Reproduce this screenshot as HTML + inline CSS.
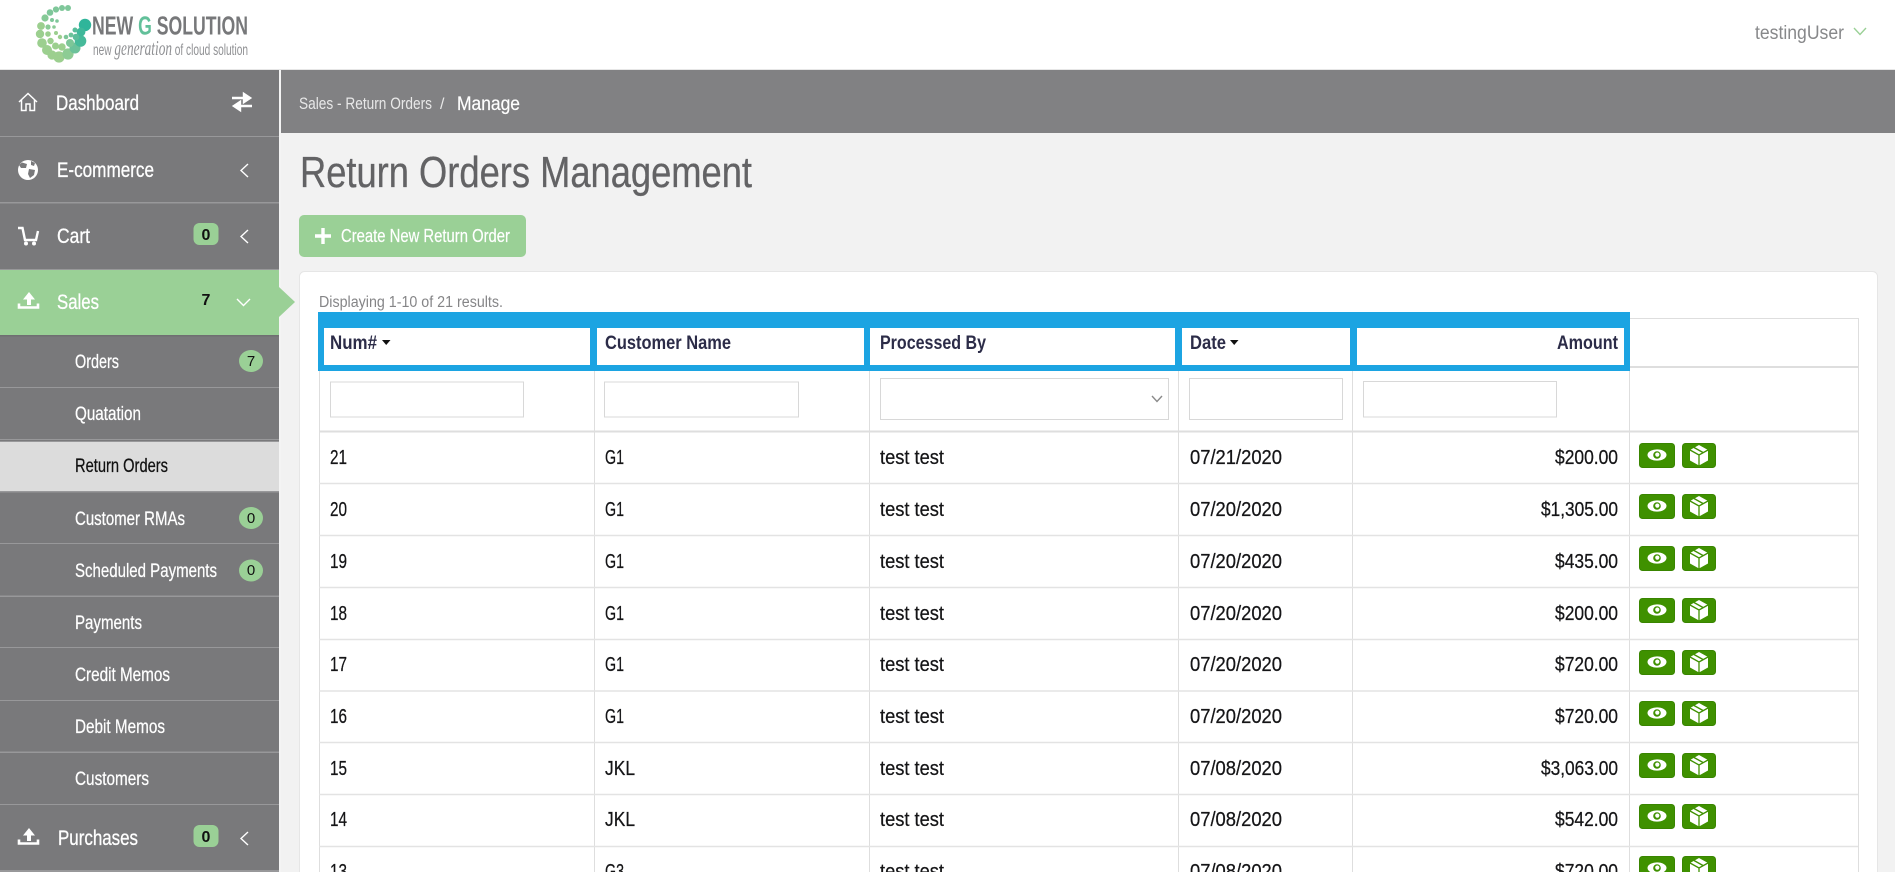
<!DOCTYPE html>
<html lang="en">
<head>
<meta charset="utf-8">
<title>Return Orders Management</title>
<style>
html,body{margin:0;padding:0;width:1895px;height:872px;overflow:hidden;background:#f2f2f2}
svg{display:block}
text{font-family:"Liberation Sans",Arial,sans-serif}
</style>
</head>
<body>
<svg xmlns="http://www.w3.org/2000/svg" width="1895" height="872" viewBox="0 0 1895 872">
<defs>
<g id="lt"><path d="M7 0L0 6.5L7 13" fill="none" stroke="#fff" stroke-width="1.4"/></g>
<g id="btns">
<rect x="0.5" y="0.5" width="35" height="24" rx="3" fill="#3f9100" stroke="#398500"/>
<ellipse cx="18" cy="12" rx="9.5" ry="5.6" fill="#fff"/>
<circle cx="18" cy="12" r="3.8" fill="#3f9100"/>
<circle cx="18.3" cy="11.6" r="2.1" fill="#fff"/>
<rect x="43.5" y="0.5" width="33" height="24" rx="3" fill="#3f9100" stroke="#398500"/>
<path d="M60 2L69 7V17.5L60 22.5L51 17.5V7Z" fill="#fff"/>
<path d="M51 7L60 12L69 7M60 12V22.5M55 4.5L64 9.5" fill="none" stroke="#3f9100" stroke-width="1.3"/>
</g>
</defs>

<!-- header -->
<rect width="1895" height="70" fill="#fff"/>
<rect y="69" width="1895" height="1" fill="#e6e6e6"/>
<g>
<g fill="#9ccf8f">
<circle cx="68" cy="8" r="3" fill="#7fc79a"/><circle cx="62" cy="8" r="3" fill="#7fc79a"/><circle cx="56" cy="9.500" r="3.100" fill="#7fc79a"/><circle cx="50" cy="12.500" r="3.300" fill="#7fc79a"/>
<circle cx="45" cy="18" r="3.600" fill="#86ca97"/><circle cx="41" cy="26" r="3.900"/><circle cx="40" cy="34" r="4.200"/><circle cx="42" cy="43" r="4.800"/>
<circle cx="47" cy="50" r="5"/><circle cx="52" cy="55" r="4.600"/><circle cx="59" cy="57" r="5.600"/><circle cx="68" cy="54" r="5.600" fill="#8dcc94"/>
<circle cx="75" cy="48" r="5.500" fill="#6cc29a"/><circle cx="80.500" cy="41" r="5.800" fill="#46ba9a"/><circle cx="85" cy="25" r="6.200" fill="#2fb59a"/><circle cx="81" cy="32" r="4.400" fill="#3fb89a"/>
<circle cx="52" cy="20" r="2" fill="#7fc79a"/><circle cx="48" cy="27" r="2.600" fill="#8acb96"/><circle cx="48" cy="34" r="2.800"/><circle cx="50.500" cy="41" r="3.200"/>
<circle cx="55.500" cy="46" r="3.500"/><circle cx="62" cy="47" r="3.700"/><circle cx="70" cy="43" r="4" fill="#7dc698"/><circle cx="76" cy="37" r="3.300" fill="#5abd9a"/>
<circle cx="75" cy="30" r="2.500" fill="#58bd9a"/><circle cx="71" cy="35" r="2.400" fill="#6cc29a"/><circle cx="66" cy="37" r="2.300" fill="#7dc698"/><circle cx="60" cy="37" r="2.200"/>
<circle cx="56" cy="33" r="2"/><circle cx="54" cy="27" r="1.800" fill="#8acb96"/><circle cx="57" cy="21" r="1.800" fill="#7fc79a"/>
</g>
<text x="92" y="34.500" font-size="26" font-weight="bold" fill="#77787a" textLength="156" lengthAdjust="spacingAndGlyphs">NEW <tspan fill="#62c09a">G</tspan> SOLUTION</text>
<text x="93" y="55" font-size="16" fill="#8f9093" textLength="155" lengthAdjust="spacingAndGlyphs">new <tspan font-family="Liberation Serif,serif" font-style="italic" font-size="21">generation</tspan> of cloud solution</text>
</g>
<text x="1755" y="39" font-size="19" fill="#87888a" textLength="89" lengthAdjust="spacingAndGlyphs">testingUser</text>
<path d="M1854 28L1860 34.500L1866 28" fill="none" stroke="#9ad096" stroke-width="1.400"/>

<!-- sidebar -->
<rect y="70" width="279" height="802" fill="#79797b"/>
<rect x="279" y="70" width="2" height="802" fill="#f4f4f4"/>
<rect y="270" width="279" height="65" fill="#9ad096"/>
<path d="M279 287L295 302L279 317Z" fill="#9ad096"/>
<rect y="442" width="279" height="50" fill="#dcdcdc"/>
<g fill="#98989a">
<rect y="136" width="279" height="1"/><rect y="202" width="279" height="1.500"/><rect y="269" width="279" height="1"/>
<rect y="335" width="279" height="1.500" fill="#6f6f71"/>
<rect y="387" width="279" height="1"/><rect y="439" width="279" height="1"/><rect y="441" width="279" height="1"/><rect y="491" width="279" height="1.500"/>
<rect y="543" width="279" height="1"/><rect y="595.500" width="279" height="1.500"/><rect y="647" width="279" height="1"/><rect y="700" width="279" height="1"/>
<rect y="751.500" width="279" height="1.500"/><rect y="804" width="279" height="1"/><rect y="870" width="279" height="2"/>
</g>

<!-- side icons -->
<path d="M19 102L28 93.500L37 102M21.500 100V110.500H26V104H30V110.500H34.500V100" fill="none" stroke="#fff" stroke-width="1.500"/>
<circle cx="28" cy="170" r="10" fill="#fff"/>
<path d="M22 162.500L27 164L26 168L21 168L19 165ZM29 169L35 170L34 175L30 178L28 174ZM31 161L35 163L34 166L31 165Z" fill="#79797b"/>
<path d="M18 228H22.500L25 240H36L38 231" fill="none" stroke="#fff" stroke-width="2.400"/>
<circle cx="26" cy="243.500" r="2" fill="#fff"/><circle cx="34" cy="243.500" r="2" fill="#fff"/>
<path d="M29 292L35 299.500H31V305H27V299.500H23Z" fill="#fff"/>
<path d="M19 303.500V307.500H38V303.500" fill="none" stroke="#fff" stroke-width="2.600"/>
<path d="M29 828L35 835.500H31V841H27V835.500H23Z" fill="#fff"/>
<path d="M19 839.500V843.500H38V839.500" fill="none" stroke="#fff" stroke-width="2.600"/>
<path d="M232 98H249M244 94L250 98L244 102V94Z" stroke="#fff" stroke-width="2.400" fill="#fff"/>
<path d="M252 106H235M240 102L234 106L240 110V102Z" stroke="#fff" stroke-width="2.400" fill="#fff"/>
<use href="#lt" x="241" y="164"/>
<use href="#lt" x="241" y="230"/>
<use href="#lt" x="241" y="832"/>
<path d="M237 299L243.500 305.500L250 299" fill="none" stroke="#fff" stroke-width="1.400"/>

<!-- side labels -->
<g fill="#fff" stroke="#fff" stroke-width=".3" font-size="21">
<text x="56" y="110" textLength="83" lengthAdjust="spacingAndGlyphs">Dashboard</text>
<text x="57" y="177" textLength="97" lengthAdjust="spacingAndGlyphs">E-commerce</text>
<text x="57" y="243" textLength="33" lengthAdjust="spacingAndGlyphs">Cart</text>
<text x="57" y="309" textLength="42" lengthAdjust="spacingAndGlyphs">Sales</text>
<text x="58" y="845" textLength="80" lengthAdjust="spacingAndGlyphs">Purchases</text>
</g>
<g fill="#fff" stroke="#fff" stroke-width=".25" font-size="19">
<text x="75" y="368" textLength="44" lengthAdjust="spacingAndGlyphs">Orders</text>
<text x="75" y="420" textLength="66" lengthAdjust="spacingAndGlyphs">Quatation</text>
<text x="75" y="472" textLength="93" lengthAdjust="spacingAndGlyphs" fill="#111" stroke="#111">Return Orders</text>
<text x="75" y="525" textLength="110" lengthAdjust="spacingAndGlyphs">Customer RMAs</text>
<text x="75" y="577" textLength="142" lengthAdjust="spacingAndGlyphs">Scheduled Payments</text>
<text x="75" y="629" textLength="67" lengthAdjust="spacingAndGlyphs">Payments</text>
<text x="75" y="681" textLength="95" lengthAdjust="spacingAndGlyphs">Credit Memos</text>
<text x="75" y="733" textLength="90" lengthAdjust="spacingAndGlyphs">Debit Memos</text>
<text x="75" y="785" textLength="74" lengthAdjust="spacingAndGlyphs">Customers</text>
</g>

<!-- badges -->
<g fill="#9ad096">
<rect x="193.500" y="223" width="25" height="22" rx="6"/>
<rect x="193.500" y="825" width="25" height="22" rx="6"/>
<ellipse cx="251" cy="361" rx="12" ry="11"/>
<ellipse cx="251" cy="518" rx="12" ry="11"/>
<ellipse cx="251" cy="570.500" rx="12" ry="11"/>
</g>
<g fill="#111" text-anchor="middle">
<g font-size="16" font-weight="bold">
<text x="206" y="240">0</text>
<text x="206" y="305">7</text>
<text x="206" y="842">0</text>
</g>
<g font-size="15">
<text x="251" y="366">7</text>
<text x="251" y="523">0</text>
<text x="251" y="575">0</text>
</g>
</g>

<!-- breadcrumb -->
<rect x="281" y="70" width="1614" height="63" fill="#818183"/>
<text x="299" y="109" font-size="16.500" fill="#e8e8e8" textLength="133" lengthAdjust="spacingAndGlyphs">Sales - Return Orders</text>
<text x="440" y="109" font-size="16" fill="#e8e8e8">/</text>
<text x="457" y="110" font-size="19.500" fill="#fff" stroke="#fff" stroke-width=".2" textLength="63" lengthAdjust="spacingAndGlyphs">Manage</text>

<!-- title and button -->
<text x="300" y="187" font-size="44" fill="#636365" stroke="#636365" stroke-width=".3" textLength="452" lengthAdjust="spacingAndGlyphs">Return Orders Management</text>
<rect x="299" y="215" width="227" height="42" rx="5" fill="#9ad096"/>
<path d="M315 236H331M323 228V244" stroke="#fff" stroke-width="3.400"/>
<text x="341" y="242" font-size="18.500" fill="#fff" stroke="#fff" stroke-width=".2" textLength="169" lengthAdjust="spacingAndGlyphs">Create New Return Order</text>

<!-- card -->
<rect x="299.500" y="271.500" width="1578" height="620" rx="5" fill="#fff" stroke="#e6e6e6"/>
<text x="319" y="307" font-size="15.500" fill="#858587" textLength="184" lengthAdjust="spacingAndGlyphs">Displaying 1-10 of 21 results.</text>

<!-- table lines -->
<g fill="none" stroke="#dedede">
<path d="M319.500 318V872M594.500 318V872M869.500 318V872M1178.500 318V872M1352.500 318V872M1629.500 318V872M1858.500 318V872"/>
<path d="M319 318.500H1858"/>
<path d="M319 367H1858M319 431.500H1858" stroke-width="2"/>
<path d="M319 483.500H1858M319 535.500H1858M319 587.500H1858M319 639.500H1858M319 691H1858M319 742.500H1858M319 794.500H1858M319 846.500H1858" stroke="#e3e3e3" stroke-width="1.500"/>
</g>

<!-- highlight -->
<rect x="318" y="312" width="1312" height="59" fill="#1ca4e2"/>
<g fill="#fff">
<rect x="324" y="328" width="266" height="37"/>
<rect x="597" y="328" width="267" height="37"/>
<rect x="870" y="328" width="305" height="37"/>
<rect x="1182" y="328" width="168" height="37"/>
<rect x="1357" y="328" width="267" height="37"/>
</g>
<g font-size="19.500" font-weight="bold" fill="#2c2c48">
<text x="330" y="349" textLength="47" lengthAdjust="spacingAndGlyphs">Num#</text>
<text x="605" y="349" textLength="126" lengthAdjust="spacingAndGlyphs">Customer Name</text>
<text x="880" y="349" textLength="106" lengthAdjust="spacingAndGlyphs">Processed By</text>
<text x="1190" y="349" textLength="36" lengthAdjust="spacingAndGlyphs">Date</text>
<text x="1557" y="349" textLength="61" lengthAdjust="spacingAndGlyphs">Amount</text>
</g>
<path d="M382 340H390.500L386.200 345ZM1230 340H1238.500L1234.200 345Z" fill="#111"/>

<!-- filters -->
<g fill="#fff" stroke="#d8d8d8">
<rect x="330.500" y="382" width="193" height="35"/>
<rect x="604.500" y="382" width="194" height="35"/>
<rect x="880.500" y="378.500" width="288" height="41"/>
<rect x="1189.500" y="378.500" width="153" height="41"/>
<rect x="1363.500" y="381.500" width="193" height="35.500"/>
</g>
<path d="M1152 396L1157 401.500L1162 396" fill="none" stroke="#8a8a8a" stroke-width="1.400"/>

<!-- rows -->
<g font-size="20" fill="#151517" stroke="#151517" stroke-width=".25">
<text x="330" y="464" textLength="17" lengthAdjust="spacingAndGlyphs">21</text><text x="605" y="464" textLength="19" lengthAdjust="spacingAndGlyphs">G1</text><text x="880" y="464" textLength="64" lengthAdjust="spacingAndGlyphs">test test</text><text x="1190" y="464" textLength="92" lengthAdjust="spacingAndGlyphs">07/21/2020</text><text x="1555" y="464" textLength="63" lengthAdjust="spacingAndGlyphs">$200.00</text>
<text x="330" y="516" textLength="17" lengthAdjust="spacingAndGlyphs">20</text><text x="605" y="516" textLength="19" lengthAdjust="spacingAndGlyphs">G1</text><text x="880" y="516" textLength="64" lengthAdjust="spacingAndGlyphs">test test</text><text x="1190" y="516" textLength="92" lengthAdjust="spacingAndGlyphs">07/20/2020</text><text x="1541" y="516" textLength="77" lengthAdjust="spacingAndGlyphs">$1,305.00</text>
<text x="330" y="568" textLength="17" lengthAdjust="spacingAndGlyphs">19</text><text x="605" y="568" textLength="19" lengthAdjust="spacingAndGlyphs">G1</text><text x="880" y="568" textLength="64" lengthAdjust="spacingAndGlyphs">test test</text><text x="1190" y="568" textLength="92" lengthAdjust="spacingAndGlyphs">07/20/2020</text><text x="1555" y="568" textLength="63" lengthAdjust="spacingAndGlyphs">$435.00</text>
<text x="330" y="620" textLength="17" lengthAdjust="spacingAndGlyphs">18</text><text x="605" y="620" textLength="19" lengthAdjust="spacingAndGlyphs">G1</text><text x="880" y="620" textLength="64" lengthAdjust="spacingAndGlyphs">test test</text><text x="1190" y="620" textLength="92" lengthAdjust="spacingAndGlyphs">07/20/2020</text><text x="1555" y="620" textLength="63" lengthAdjust="spacingAndGlyphs">$200.00</text>
<text x="330" y="671" textLength="17" lengthAdjust="spacingAndGlyphs">17</text><text x="605" y="671" textLength="19" lengthAdjust="spacingAndGlyphs">G1</text><text x="880" y="671" textLength="64" lengthAdjust="spacingAndGlyphs">test test</text><text x="1190" y="671" textLength="92" lengthAdjust="spacingAndGlyphs">07/20/2020</text><text x="1555" y="671" textLength="63" lengthAdjust="spacingAndGlyphs">$720.00</text>
<text x="330" y="723" textLength="17" lengthAdjust="spacingAndGlyphs">16</text><text x="605" y="723" textLength="19" lengthAdjust="spacingAndGlyphs">G1</text><text x="880" y="723" textLength="64" lengthAdjust="spacingAndGlyphs">test test</text><text x="1190" y="723" textLength="92" lengthAdjust="spacingAndGlyphs">07/20/2020</text><text x="1555" y="723" textLength="63" lengthAdjust="spacingAndGlyphs">$720.00</text>
<text x="330" y="775" textLength="17" lengthAdjust="spacingAndGlyphs">15</text><text x="605" y="775" textLength="30" lengthAdjust="spacingAndGlyphs">JKL</text><text x="880" y="775" textLength="64" lengthAdjust="spacingAndGlyphs">test test</text><text x="1190" y="775" textLength="92" lengthAdjust="spacingAndGlyphs">07/08/2020</text><text x="1541" y="775" textLength="77" lengthAdjust="spacingAndGlyphs">$3,063.00</text>
<text x="330" y="826" textLength="17" lengthAdjust="spacingAndGlyphs">14</text><text x="605" y="826" textLength="30" lengthAdjust="spacingAndGlyphs">JKL</text><text x="880" y="826" textLength="64" lengthAdjust="spacingAndGlyphs">test test</text><text x="1190" y="826" textLength="92" lengthAdjust="spacingAndGlyphs">07/08/2020</text><text x="1555" y="826" textLength="63" lengthAdjust="spacingAndGlyphs">$542.00</text>
<text x="330" y="878" textLength="17" lengthAdjust="spacingAndGlyphs">13</text><text x="605" y="878" textLength="19" lengthAdjust="spacingAndGlyphs">G3</text><text x="880" y="878" textLength="64" lengthAdjust="spacingAndGlyphs">test test</text><text x="1190" y="878" textLength="92" lengthAdjust="spacingAndGlyphs">07/08/2020</text><text x="1555" y="878" textLength="63" lengthAdjust="spacingAndGlyphs">$720.00</text>
</g>

<!-- action buttons -->
<use href="#btns" x="1639" y="443"/>
<use href="#btns" x="1639" y="494"/>
<use href="#btns" x="1639" y="546"/>
<use href="#btns" x="1639" y="598"/>
<use href="#btns" x="1639" y="650"/>
<use href="#btns" x="1639" y="701"/>
<use href="#btns" x="1639" y="753"/>
<use href="#btns" x="1639" y="804"/>
<use href="#btns" x="1639" y="856"/>
</svg>
</body>
</html>
